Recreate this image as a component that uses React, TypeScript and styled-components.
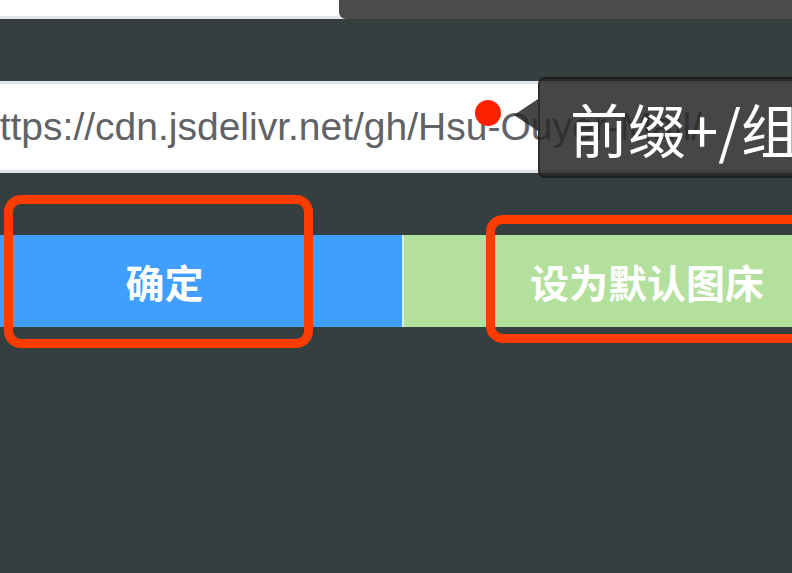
import React from "react";
import styled, { createGlobalStyle } from "styled-components";

const GlobalStyle = createGlobalStyle`
  html, body {
    margin: 0;
    padding: 0;
    background: #353f40;
    overflow: hidden;
  }
  * { box-sizing: border-box; }
`;

const Page = styled.div`
  position: relative;
  width: 792px;
  height: 573px;
  overflow: hidden;
  background: #353f40;
  display: flex;
  flex-direction: column;
  font-family: "Liberation Sans", Arial, "Noto Sans CJK SC", sans-serif;
`;

const TopBar = styled.div`
  height: 19px;
  background: #ffffff;
  border-bottom: 3px solid #e2e5ea;
  display: flex;
  justify-content: flex-end;
  flex-shrink: 0;
`;

const TopPanel = styled.div`
  width: 453px;
  height: 19px;
  background: #4b4b4b;
  border-bottom-left-radius: 7px;
`;

const InputRow = styled.div`
  position: relative;
  margin-top: 62px;
  height: 92px;
  flex-shrink: 0;
`;

const UrlField = styled.div`
  margin-left: -40px;
  width: 900px;
  height: 92px;
  background: #ffffff;
  border-top: 3px solid #dfe2e8;
  border-bottom: 3px solid #dfe2e8;
  padding-left: 18px;
  display: flex;
  align-items: center;
  font-family: "Liberation Sans", Arial, sans-serif;
  font-size: 39px;
  color: #606266;
  white-space: nowrap;
  overflow: hidden;
`;

const Dot = styled.span`
  position: absolute;
  left: 475px;
  top: 19px;
  width: 26px;
  height: 26px;
  border-radius: 50%;
  background: #ff2000;
`;

const Tooltip = styled.div`
  position: absolute;
  left: 538px;
  top: -4px;
  width: 300px;
  height: 101px;
  background: rgba(40, 40, 40, 0.86);
  border: 2px solid rgba(0, 0, 0, 0.35);
  border-radius: 7px;
  padding-left: 30px;
  display: flex;
  align-items: center;
  color: #ffffff;
  font-family: "Noto Sans CJK SC", "Noto Sans", sans-serif;
  font-size: 58px;
  white-space: nowrap;

  &::before {
    content: "";
    position: absolute;
    left: -26px;
    top: 20px;
    border-style: solid;
    border-width: 16px 24px 16px 0;
    border-color: transparent rgba(40, 40, 40, 0.86) transparent transparent;
  }
`;

const ButtonRow = styled.div`
  margin-top: 62px;
  margin-left: -73px;
  height: 92px;
  display: flex;
  flex-shrink: 0;
`;

const Button = styled.div<{ $variant: "primary" | "success" }>`
  flex: 0 0 auto;
  width: ${(p) => (p.$variant === "primary" ? "475px" : "488px")};
  height: 92px;
  display: flex;
  align-items: center;
  justify-content: center;
  color: #ffffff;
  font-family: "Noto Sans CJK SC", "Noto Sans", sans-serif;
  font-weight: 700;
  font-size: 39px;
  background: ${(p) => (p.$variant === "primary" ? "#409eff" : "#b3e19d")};
  border-left: ${(p) => (p.$variant === "success" ? "2px solid #d8eecd" : "none")};
`;

const Highlight = styled.div<{ $left: number; $top: number; $w: number; $h: number }>`
  position: absolute;
  left: ${(p) => p.$left}px;
  top: ${(p) => p.$top}px;
  width: ${(p) => p.$w}px;
  height: ${(p) => p.$h}px;
  border: 9px solid #ff3c00;
  border-radius: 17px;
  pointer-events: none;
`;

export default function App() {
  return (
    <>
      <GlobalStyle />
      <Page>
        <TopBar>
          <TopPanel />
        </TopBar>
        <InputRow>
          <UrlField>https://cdn.jsdelivr.net/gh/Hsu-Ouyer-Mail/</UrlField>
          <Dot />
          <Tooltip>前缀+/组</Tooltip>
        </InputRow>
        <ButtonRow>
          <Button $variant="primary">确定</Button>
          <Button $variant="success">设为默认图床</Button>
        </ButtonRow>
        <Highlight $left={4} $top={195} $w={309} $h={153} />
        <Highlight $left={486} $top={215} $w={400} $h={128} />
      </Page>
    </>
  );
}
